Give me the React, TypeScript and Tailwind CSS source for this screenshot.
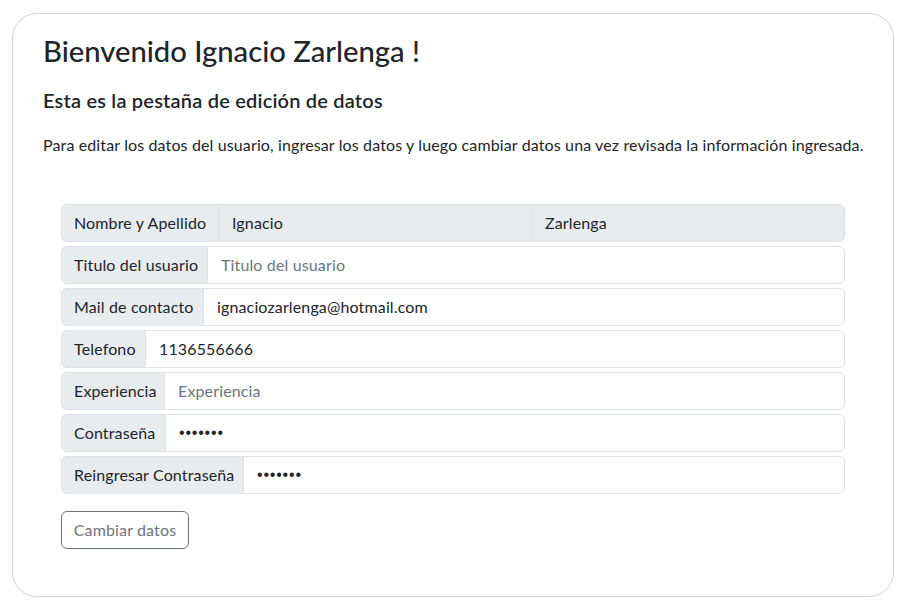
import React from "react";

type Row = {
  label: string;
  w: string;
  value?: string;
  placeholder?: string;
  password?: boolean;
};

const rows: Row[] = [
  { label: "Titulo del usuario", w: "w-[147px]", placeholder: "Titulo del usuario" },
  { label: "Mail de contacto", w: "w-[143px]", value: "ignaciozarlenga@hotmail.com" },
  { label: "Telefono", w: "w-[85px]", value: "1136556666" },
  { label: "Experiencia", w: "w-[104px]", placeholder: "Experiencia" },
  { label: "Contraseña", w: "w-[105px]", value: "1234567", password: true },
  { label: "Reingresar Contraseña", w: "w-[183px]", value: "1234567", password: true },
];

const labelCls =
  "shrink-0 flex items-center px-[12px] bg-[#e9ecef] border border-[#dee2e6] rounded-l-[6px] text-[16px] leading-[24px] tracking-[0.14px] text-[#212529] whitespace-nowrap";

export default function App() {
  return (
    <div className="min-h-[607px] bg-white pt-[13px] pl-[12px] font-[Lato,'Noto_Sans',sans-serif] text-[#212529]">
      <div className="w-[882px] h-[584px] border border-[#d3d3d3] rounded-[25px] pt-[19px] px-[30px]">
        <h2 className="text-[29.2px] leading-[1.2] font-medium mb-[20px]">
          Bienvenido Ignacio Zarlenga !
        </h2>
        <h5 className="text-[20px] leading-[1.2] font-semibold tracking-[0.2px] mb-[21px]">
          Esta es la pestaña de edición de datos
        </h5>
        <p className="text-[16px] leading-[24px] tracking-[0.13px] whitespace-nowrap mb-[47px]">
          Para editar los datos del usuario, ingresar los datos y luego cambiar datos una vez revisada la información ingresada.
        </p>
        <form className="px-[18px] flex flex-col" onSubmit={(e) => e.preventDefault()}>
          <div className="flex flex-col gap-[4px]">
            <div className="flex h-[38px]">
              <span className={`${labelCls} w-[158px]`}>Nombre y Apellido</span>
              <input
                disabled
                defaultValue="Ignacio"
                className="flex-1 min-w-0 -ml-px border border-[#dee2e6] bg-[#e9ecef] pl-[13px] pr-[12px] text-[16px] tracking-[0.14px] text-[#212529] outline-none"
              />
              <input
                disabled
                defaultValue="Zarlenga"
                className="flex-1 min-w-0 -ml-px border border-[#dee2e6] bg-[#e9ecef] rounded-r-[6px] pl-[13px] pr-[12px] text-[16px] tracking-[0.14px] text-[#212529] outline-none"
              />
            </div>
            {rows.map((r) => (
              <div key={r.label} className="flex h-[38px]">
                <span className={`${labelCls} ${r.w}`}>{r.label}</span>
                {r.password ? (
                  <input
                    type="password"
                    defaultValue={r.value}
                    className="flex-1 min-w-0 -ml-px border border-[#dee2e6] bg-white rounded-r-[6px] pl-[13px] pr-[12px] font-['Liberation_Sans',sans-serif] text-[16px] tracking-[0.8px] text-[#212529] outline-none"
                  />
                ) : (
                  <input
                    type="text"
                    defaultValue={r.value}
                    placeholder={r.placeholder}
                    className="flex-1 min-w-0 -ml-px border border-[#dee2e6] bg-white rounded-r-[6px] pl-[13px] pr-[12px] text-[16px] tracking-[0.14px] text-[#212529] placeholder:text-[#6c757d] outline-none"
                  />
                )}
              </div>
            ))}
          </div>
          <div className="mt-[17px]">
            <button
              type="submit"
              className="h-[38px] w-[128px] border border-[#6c757d] rounded-[6px] text-[16px] tracking-[0.14px] text-[#6c757d] bg-white"
            >
              Cambiar datos
            </button>
          </div>
        </form>
      </div>
    </div>
  );
}
